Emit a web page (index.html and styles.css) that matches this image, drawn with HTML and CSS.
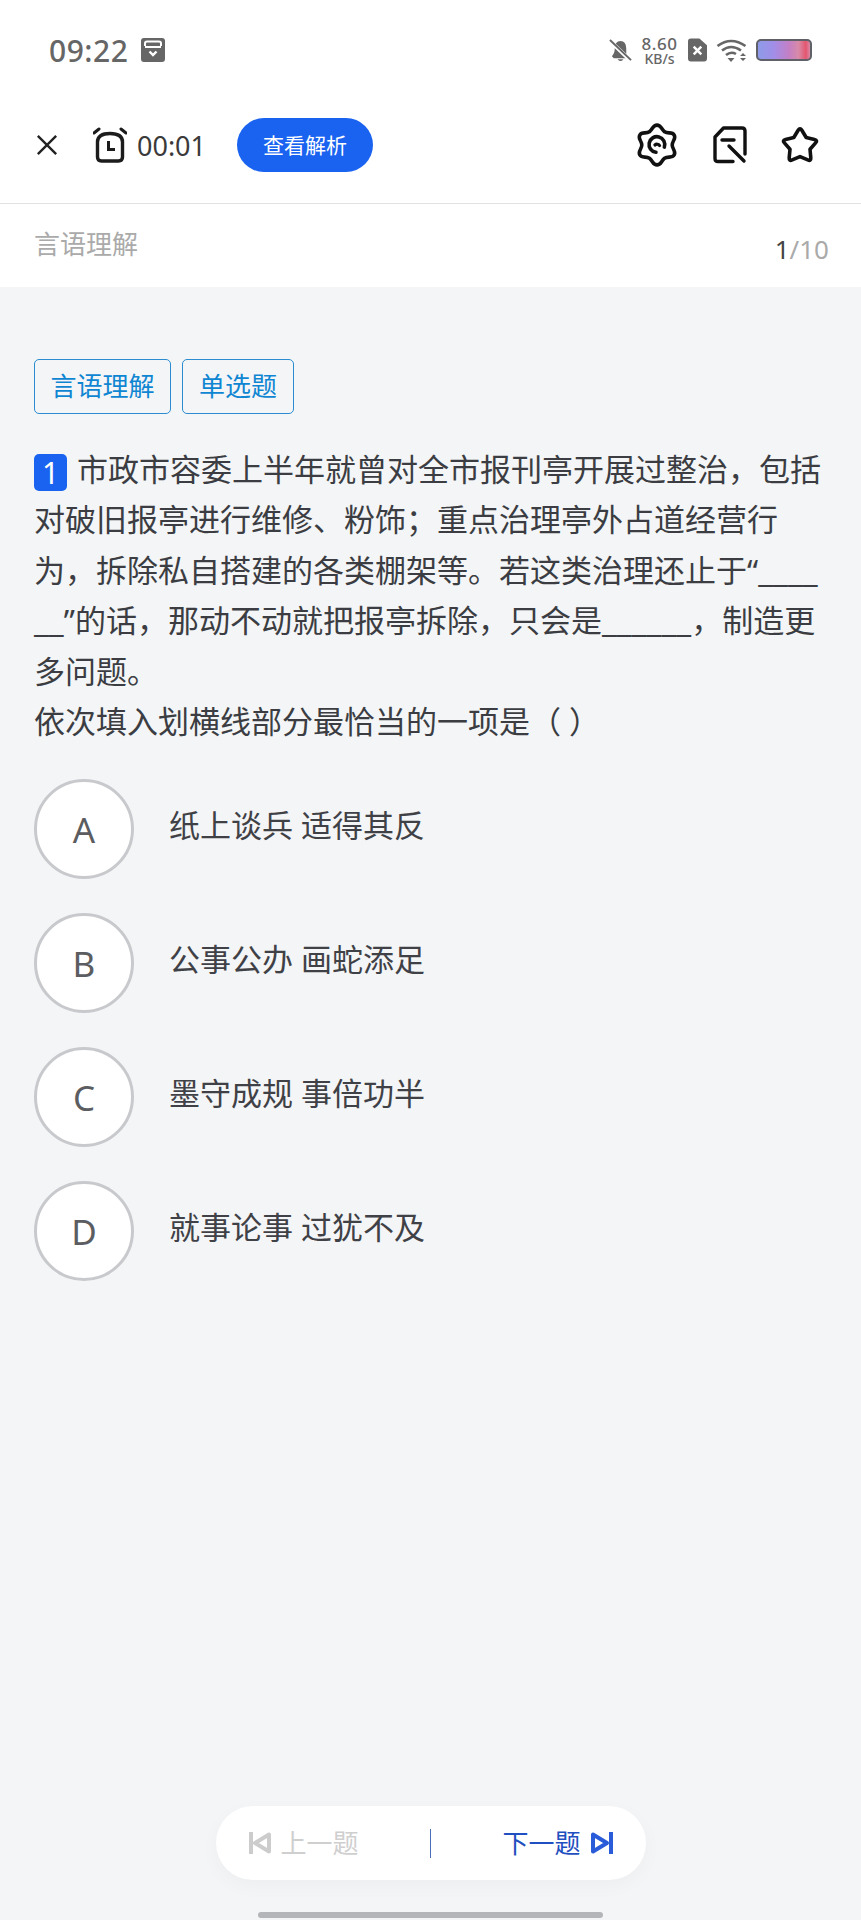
FILE: index.html
```html
<!DOCTYPE html>
<html lang="zh-CN">
<head>
    <meta charset="UTF-8">
    <meta name="viewport" content="width=device-width, initial-scale=1.0">
    <title>言语理解</title>
    <link rel="stylesheet" href="styles.css">
</head>
<body>
    <div class="status-bar">
        <div class="status-left">
            <span class="clock">09:22</span>
            <svg class="st-box" viewBox="0 0 24 24"><rect width="24" height="24" rx="3" fill="#666"/><path d="M4 8V5.500Q4 3.500 6 3.500H18Q20 3.500 20 5.500V8" fill="none" stroke="#fff" stroke-width="2"/><rect x="4" y="8" width="16" height="2" fill="#fff"/><path d="M8.500 13.500L12 17L15.500 13.500" fill="none" stroke="#fff" stroke-width="2.400"/></svg>
        </div>
        <div class="status-right">
            <svg class="st-bell" viewBox="0 0 24 26"><path d="M3 19Q6 16 6 11Q6 3 12 3Q18 3 18 11V17L20 21H5Z" fill="#666"/><path d="M9 22H15Q12 26 9 22Z" fill="#666"/><path d="M1 3L23 24" stroke="#fff" stroke-width="4"/><path d="M1 2L23 23" stroke="#666" stroke-width="2"/></svg>
            <div class="net-speed"><span class="net-num">8.60</span><span class="net-unit">KB/s</span></div>
            <svg class="st-sim" viewBox="0 0 20 24"><path d="M3 0H12L20 7V21Q20 24 17 24H3Q0 24 0 21V3Q0 0 3 0Z" fill="#666"/><path d="M6 8.500L14 16.500M14 8.500L6 16.500" stroke="#fff" stroke-width="2.600"/></svg>
            <svg class="st-wifi" viewBox="0 0 31 24"><path d="M1.500 8Q15 -2 29.500 8" fill="none" stroke="#666" stroke-width="2.600"/><path d="M6 12.500Q15 5.500 25 12.500" fill="none" stroke="#666" stroke-width="2.600"/><path d="M10 17Q15 13 20 16" fill="none" stroke="#666" stroke-width="2.600"/><path d="M11.500 20H18.500L15 24Z" fill="#666"/><path d="M24 18H30L27 15ZM24 20H30L27 23Z" fill="#666"/></svg>
            <div class="battery"></div>
        </div>
    </div>

    <div class="top-bar">
        <div class="top-left">
            <svg class="ic-close" viewBox="0 0 24 24"><path d="M2 2L22 22M22 2L2 22" stroke="#222" stroke-width="2.600" fill="none"/></svg>
            <svg class="ic-alarm" viewBox="0 0 34 36"><path d="M4.500 15Q4.500 6.500 17 6.500Q29.500 6.500 29.500 15V30Q29.500 34 25.500 34H8.500Q4.500 34 4.500 30Z" fill="none" stroke="#1c1c1c" stroke-width="3.400"/><path d="M1 6L6 2M33 6L28 2" stroke="#1c1c1c" stroke-width="3" stroke-linecap="round"/><path d="M15.500 14V22.500H22" fill="none" stroke="#1c1c1c" stroke-width="3"/></svg>
            <span class="timer">00:01</span>
            <button class="analysis-btn">查看解析</button>
        </div>
        <div class="top-right">
            <svg class="ic-gear" viewBox="-1 -1 42 42"><path d="M20 1C24 1 23.500 4.200 27.250 7.440C30.500 9.500 34.450 7.040 36.450 10.500C38.450 13.960 34.500 16 34.500 20C34.500 24 38.450 26.040 36.450 29.500C34.450 32.960 30.500 30.500 27.250 32.560C23.500 35.800 24 39 20 39C16 39 16.500 35.800 12.750 32.560C9.500 30.500 5.550 32.960 3.550 29.500C1.550 26.040 5.500 24 5.500 20C5.500 16 1.550 13.960 3.550 10.500C5.550 7.040 9.500 9.500 12.750 7.440C16.500 4.200 16 1 20 1Z" fill="none" stroke="#111" stroke-width="3.400"/><path d="M27 22A7.500 7.500 0 1 0 19 27" fill="none" stroke="#111" stroke-width="3.400" stroke-linecap="round"/><path d="M22.500 20.500A3 3 0 0 0 18 20" fill="none" stroke="#111" stroke-width="3" stroke-linecap="round"/></svg>
            <svg class="ic-note" viewBox="0 0 34 38"><path d="M20 35.500H5Q2 35.500 2 32.500V11L10.500 2H29Q32 2 32 5V28" fill="none" stroke="#111" stroke-width="3.400" stroke-linecap="round" stroke-linejoin="round"/><path d="M9 14H21M16 20L31 35" fill="none" stroke="#111" stroke-width="3.400" stroke-linecap="round"/></svg>
            <svg class="ic-star" viewBox="0 0 38 38"><path d="M13.120 11.910L17.240 4.970Q19 2 20.760 4.970L24.880 11.910L32.730 13.680Q36.100 14.440 33.820 17.040L28.510 23.090L29.260 31.120Q29.580 34.560 26.410 33.190L19 30L11.590 33.190Q8.420 34.560 8.740 31.120L9.490 23.090L4.180 17.040Q1.900 14.440 5.270 13.680Z" fill="none" stroke="#111" stroke-width="3.400" stroke-linejoin="round"/></svg>
        </div>
    </div>

    <div class="sub-bar">
        <span class="sub-title">言语理解</span>
        <span class="progress"><b>1</b>/10</span>
    </div>

    <div class="main">
        <div class="tags">
            <span class="tag">言语理解</span>
            <span class="tag tag-short">单选题</span>
        </div>

        <p class="question"><span class="q-num">1</span>市政市容委上半年就曾对全市报刊亭开展过整治，包括<br>对破旧报亭进行维修、粉饰；重点治理亭外占道经营行<br>为，拆除私自搭建的各类棚架等。若这类治理还止于“<span class="blank">____</span><br><span class="blank">__</span>”的话，那动不动就把报亭拆除，只会是<span class="blank">______</span>，制造更<br>多问题。<br>依次填入划横线部分最恰当的一项是（ ）</p>

        <div class="options">
            <div class="option"><span class="opt-circle">A</span><span class="opt-text">纸上谈兵 适得其反</span></div>
            <div class="option"><span class="opt-circle">B</span><span class="opt-text">公事公办 画蛇添足</span></div>
            <div class="option"><span class="opt-circle">C</span><span class="opt-text">墨守成规 事倍功半</span></div>
            <div class="option"><span class="opt-circle">D</span><span class="opt-text">就事论事 过犹不及</span></div>
        </div>
    </div>

    <div class="pager">
        <div class="pager-side pager-prev">
            <svg class="ic-skip" viewBox="0 0 22 24"><path d="M2 1V23" stroke="#ccc" stroke-width="4" fill="none"/><path d="M20 3.500V20.500L6 12Z" stroke="#ccc" stroke-width="4" fill="none" stroke-linejoin="round"/></svg>
            <span>上一题</span>
        </div>
        <div class="pager-line"></div>
        <div class="pager-side pager-next">
            <span>下一题</span>
            <svg class="ic-skip" viewBox="0 0 22 24"><path d="M20 1V23" stroke="#2a5bd8" stroke-width="4" fill="none"/><path d="M2 3.500V20.500L16 12Z" stroke="#2a5bd8" stroke-width="4" fill="none" stroke-linejoin="round"/></svg>
        </div>
    </div>
    <div class="home-bar"></div>
</body>
</html>
```

FILE: styles.css
```css
body, html {
    margin: 0;
    padding: 0;
    width: 100%;
    height: 100%;
    overflow: hidden;
}
body {
    display: flex;
    flex-direction: column;
    background-color: #f4f5f7;
    font-family: "Noto Sans", "Noto Sans CJK SC", sans-serif;
    color: #3b3d42;
}
svg {
    display: block;
    flex: none;
}

/* status bar */
.status-bar {
    height: 100px;
    background-color: #fff;
    display: flex;
    justify-content: space-between;
    align-items: center;
    padding: 0 49px;
    box-sizing: border-box;
}
.status-left {
    display: flex;
    align-items: center;
    gap: 13px;
}
.clock {
    font-size: 30px;
    font-weight: 500;
    color: #666;
    letter-spacing: 0.5px;
}
.st-box {
    width: 24px;
    height: 24px;
}
.status-right {
    display: flex;
    align-items: center;
}
.st-bell {
    width: 23px;
    height: 25px;
    margin-right: 8px;
}
.net-speed {
    display: flex;
    flex-direction: column;
    align-items: center;
    width: 39px;
    color: #666;
    font-weight: 500;
    margin-right: 9px;
}
.net-num {
    font-size: 17px;
    line-height: 16px;
    letter-spacing: 0.5px;
}
.net-unit {
    font-size: 14px;
    line-height: 13px;
}
.st-sim {
    width: 19px;
    height: 24px;
    margin-right: 9px;
}
.st-wifi {
    width: 31px;
    height: 24px;
    margin-right: 9px;
}
.battery {
    width: 52px;
    height: 18px;
    border: 2px solid #5f6068;
    border-radius: 5px;
    background: linear-gradient(90deg, #8e9be8 0%, #a18ee8 30%, #c47fc4 60%, #d88aa8 78%, #e4566e 92%, #d88aa8 100%);
}

/* top bar */
.top-bar {
    height: 104px;
    background-color: #fff;
    border-bottom: 1px solid #e2e2e2;
    display: flex;
    justify-content: space-between;
    align-items: center;
    padding: 0 41px 13px 36px;
    box-sizing: border-box;
}
.top-left {
    display: flex;
    align-items: center;
}
.top-right {
    display: flex;
    align-items: center;
}
.ic-close {
    width: 22px;
    height: 22px;
    margin-right: 35px;
}
.ic-alarm {
    width: 34px;
    height: 36px;
    margin-right: 10px;
}
.timer {
    font-size: 27px;
    color: #3a3a3a;
    margin-right: 31px;
}
.analysis-btn {
    width: 136px;
    height: 54px;
    border: none;
    border-radius: 27px;
    background-color: #1a63f0;
    color: #fff;
    font-family: inherit;
    font-size: 21px;
    padding: 0 0 3px;
}
.ic-gear {
    width: 44px;
    height: 44px;
    margin-right: 34px;
}
.ic-note {
    width: 34px;
    height: 38px;
    margin-right: 33px;
}
.ic-star {
    width: 40px;
    height: 40px;
}

/* sub bar */
.sub-bar {
    height: 83px;
    background-color: #fff;
    display: flex;
    justify-content: space-between;
    padding: 0 32px 0 34px;
    box-sizing: border-box;
}
.sub-title {
    font-size: 26px;
    line-height: 80px;
    color: #aaa;
}
.progress {
    font-size: 26px;
    line-height: 90px;
    color: #aaa;
}
.progress b {
    font-weight: 400;
    color: #444;
}

/* question */
.main {
    flex: 1;
    padding: 72px 34px 0;
}
.tags {
    display: flex;
    gap: 11px;
}
.tag {
    width: 137px;
    height: 55px;
    box-sizing: border-box;
    display: flex;
    align-items: center;
    justify-content: center;
    padding-bottom: 3px;
    border: 1px solid #2b8ccf;
    border-radius: 5px;
    font-size: 26px;
    color: #0f86d2;
}
.tag-short {
    width: 112px;
}
.question {
    margin: 30px 0 0;
    font-size: 31px;
    line-height: 50.400px;
    color: #3b3d42;
    white-space: nowrap;
}
.blank {
    font-size: 33.500px;
    line-height: 1;
}
.q-num {
    display: inline-block;
    width: 33px;
    height: 37px;
    line-height: 37px;
    margin-right: 10px;
    border-radius: 5px;
    background-color: #1a63f0;
    color: #fff;
    text-align: center;
    font-size: 30px;
    vertical-align: -3px;
}
.options {
    margin-top: 33px;
    display: flex;
    flex-direction: column;
    gap: 34px;
}
.option {
    display: flex;
    align-items: flex-start;
    gap: 35px;
}
.opt-circle {
    width: 100px;
    height: 100px;
    box-sizing: border-box;
    flex: none;
    display: flex;
    align-items: center;
    justify-content: center;
    border: 3px solid #c8c9cc;
    border-radius: 50%;
    background-color: #fff;
    font-size: 35px;
    color: #5b5d61;
}
.opt-text {
    font-size: 31px;
    line-height: 40px;
    margin-top: 26px;
    color: #3f4146;
}

/* bottom pager */
.pager {
    align-self: center;
    width: 430px;
    height: 74px;
    box-sizing: border-box;
    display: flex;
    align-items: center;
    justify-content: space-between;
    padding: 0 33px;
    border-radius: 37px;
    background-color: #fff;
    box-shadow: 0 6px 20px rgba(0, 0, 0, 0.03);
}
.pager-side {
    display: flex;
    align-items: center;
    gap: 10px;
    font-size: 26px;
}
.pager-side span {
    margin-top: -2px;
}
.pager-prev {
    color: #cfcfcf;
}
.pager-next {
    color: #1f4fc0;
}
.ic-skip {
    width: 22px;
    height: 24px;
}
.pager-line {
    width: 1px;
    height: 29px;
    background-color: #4a6fb8;
}
.home-bar {
    align-self: center;
    width: 345px;
    height: 6px;
    margin: 32px 0 2px;
    border-radius: 3px;
    background-color: #b4b5b8;
}
```
